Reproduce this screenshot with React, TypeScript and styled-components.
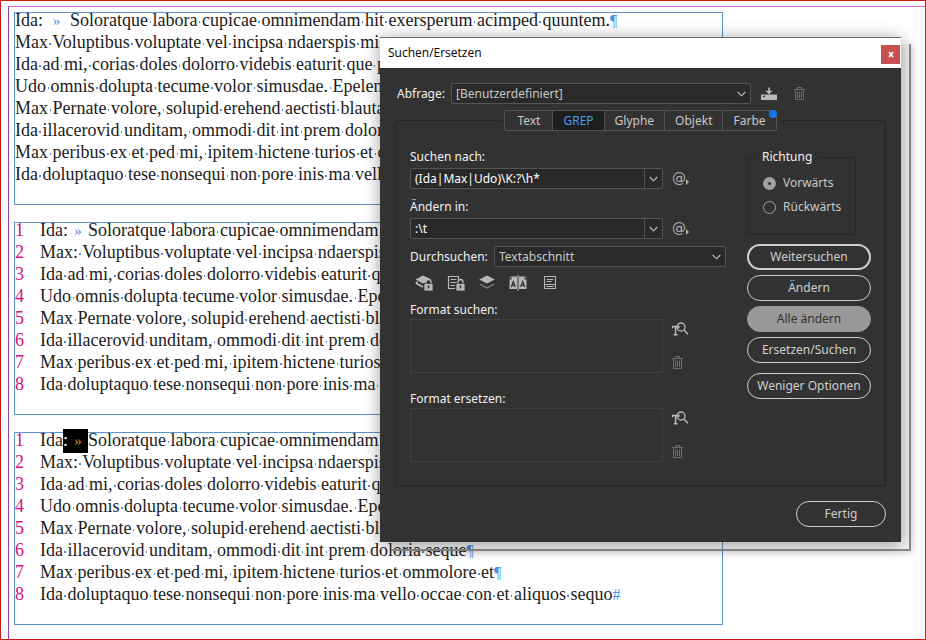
import React from "react";
import styled, { createGlobalStyle } from "styled-components";

const GlobalStyle = createGlobalStyle`
  *, *::before, *::after { box-sizing: border-box; }
  body { margin: 0; background: #fff; }
  button, input, select, textarea { font: inherit; margin: 0; }
`;

const serif = `"Liberation Serif", serif`;
const sans = `"Noto Sans", sans-serif`;
const blue = "#4a90e2";

/* ---------- document ---------- */

const Page = styled.main`
  position: relative;
  min-height: 100vh;
  border: 1px solid #c81a1a;
  padding: 5px 0 0 7px;
  display: flex;
  overflow: hidden;
  background: #fff;
`;

const MarginArea = styled.div`
  flex: 1;
  min-width: 0;
  border-top: 1px solid #cf6bd6;
  border-left: 1px solid #8344b8;
  padding: 5px 202px 0 5px;
  display: flex;
  flex-direction: column;
  gap: 17px;
`;

const Frame = styled.section`
  border: 1px solid #5b94cf;
  padding-bottom: 19px;
`;

const Lines = styled.div`
  margin-top: -4px;
  font-family: ${serif};
  font-size: 18px;
  line-height: 22px;
  color: #1c1c1c;
`;

const Line = styled.p`
  margin: 0;
  height: 22px;
  display: flex;
  white-space: pre;
`;

const LineNumber = styled.span`
  width: 25px;
  flex: none;
  color: #d6107e;
`;

const Space = styled.span`
  background: radial-gradient(circle at 50% 60%, ${blue} 0 0.8px, transparent 1px);
`;

const Mark = styled.span`
  color: ${blue};
  font-size: 16px;
  line-height: 16px;
`;

const Tab = styled.span<{ $wide?: boolean }>`
  display: inline-block;
  width: ${(p) => (p.$wide ? 27 : 20)}px;
  text-align: center;
  color: ${blue};
  font-size: 15px;
  line-height: 16px;
`;

const Selection = styled.span`
  display: inline-block;
  height: 24px;
  background: #000;
  color: #fff;
  ${Tab} { color: #d98a1c; }
`;

/* ---------- dialog ---------- */

const WindowEdge = styled.div`
  position: absolute;
  top: 43px;
  right: 14px;
  width: 520px;
  height: 507px;
  border-right: 2px solid #8c8c8c;
  border-bottom: 2px solid #8c8c8c;
  background: rgba(0, 0, 0, 0.05);
  box-shadow: 2px 2px 6px rgba(0, 0, 0, 0.15);
`;

const Dialog = styled.div`
  position: absolute;
  top: 36px;
  right: 24px;
  width: 521px;
  border-top: 1px solid #6e6e6e;
  background: #323232;
  color: #f0f0f0;
  font-family: ${sans};
  font-size: 12px;
  line-height: 16px;
  box-shadow: 0 2px 16px rgba(0, 0, 0, 0.38);
`;

const TitleBar = styled.header`
  height: 30px;
  background: #fff;
  color: #000;
  display: flex;
  align-items: center;
  justify-content: space-between;
  padding: 0 1px 0 8px;
`;

const Title = styled.h1`
  margin: 0;
  font-family: "Open Sans", sans-serif;
  font-size: 12px;
  font-weight: 400;
`;

const CloseButton = styled.button`
  width: 19px;
  height: 19px;
  margin-top: 3px;
  border: 0;
  padding: 0;
  background: #c75050;
  display: grid;
  place-items: center;
`;

const Body = styled.div`
  padding: 15px;
`;

const QueryRow = styled.div`
  display: flex;
  align-items: center;
  padding-left: 2px;
`;

const QueryLabel = styled.label`
  width: 54px;
`;

const SelectBox = styled.span`
  flex: 1;
  display: grid;
  align-items: center;
  height: 21px;
  border: 1px solid #545454;
  border-radius: 2px;
  background: #2a2a2a;
  & > * { grid-area: 1 / 1; }
  & > svg { justify-self: end; margin-right: 4px; pointer-events: none; }
`;

const Select = styled.select`
  appearance: none;
  width: 100%;
  height: 19px;
  border: 0;
  padding: 0 20px 0 4px;
  background: transparent;
  color: #c8c8c8;
`;

const QueryActions = styled.span`
  width: 135px;
  display: flex;
  padding-left: 10px;
  gap: 17px;
`;

const IconButton = styled.button`
  border: 0;
  padding: 0;
  background: none;
  display: flex;
  color: #b8b8b8;
  &:disabled { color: #6c6c6c; }
`;

const Panel = styled.section`
  margin-top: 16px;
  border: 1px solid #262626;
  border-radius: 2px;
  padding: 0 14px 23px;
`;

const Tabs = styled.div`
  width: fit-content;
  margin: -11px auto 0;
  padding: 0 3px;
  background: #323232;
  display: flex;
`;

const TabButton = styled.button<{ $active?: boolean }>`
  position: relative;
  height: 21px;
  min-width: 49px;
  margin-right: -1px;
  border: 1px solid #545454;
  padding: 0 10px;
  background: ${(p) => (p.$active ? "#1e1e1e" : "transparent")};
  color: ${(p) => (p.$active ? "#4a9be8" : "#c8c8c8")};
  &:first-child { border-radius: 2px 0 0 2px; }
  &:last-child { border-radius: 0 2px 2px 0; margin-right: 0; }
`;

const Dot = styled.span`
  position: absolute;
  top: -1px;
  right: -1px;
  width: 8px;
  height: 8px;
  border-radius: 50%;
  background: #1473e6;
`;

const Columns = styled.div`
  display: grid;
  grid-template-columns: 1fr 124px;
  column-gap: 21px;
  padding-top: 18px;
`;

const FieldLabel = styled.label<{ $gap?: number; $tight?: boolean }>`
  display: block;
  height: ${(p) => (p.$tight ? 17 : 19)}px;
  margin-top: ${(p) => p.$gap ?? 0}px;
  line-height: 16px;
`;

const FieldRow = styled.div`
  display: flex;
  gap: 9px;
`;

const Combo = styled.span`
  flex: 1;
  height: 21px;
  display: flex;
  border: 1px solid #545454;
  border-radius: 2px;
  background: #292929;
`;

const ComboInput = styled.input`
  flex: 1;
  min-width: 0;
  border: 0;
  padding: 0 4px;
  background: transparent;
  color: #fff;
`;

const ComboArrow = styled.button`
  width: 18px;
  border: 0;
  border-left: 1px solid #545454;
  padding: 0;
  background: none;
  display: grid;
  place-items: center;
`;

const SideIcons = styled.span`
  width: 54px;
  display: flex;
  flex-direction: column;
  align-items: flex-start;
  gap: 20px;
  padding-top: 3px;
`;

const AtButton = styled(IconButton)`
  font-family: "DejaVu Sans", sans-serif;
  font-size: 14px;
  line-height: 14px;
  align-items: flex-end;
  color: #b0b0b0;
`;

const ScopeRow = styled.div`
  display: flex;
  align-items: center;
  margin-top: 7px;
`;

const ScopeLabel = styled.label`
  width: 84px;
`;

const Toggles = styled.div`
  display: flex;
  gap: 14px;
  padding: 8px 0 0 5px;
`;

const FormatBox = styled.textarea`
  flex: 1;
  display: block;
  height: 54px;
  border: 1px solid #404040;
  padding: 2px 4px;
  background: transparent;
  color: #fff;
  resize: none;
`;

const Side = styled.div`
  display: flex;
  flex-direction: column;
  gap: 5px;
`;

const Direction = styled.fieldset`
  margin: 0 15px 4px 0;
  height: 86px;
  border: 1px solid #262626;
  border-radius: 2px;
  padding: 6px 0 0 15px;
`;

const Legend = styled.legend`
  padding: 0 6px;
  margin-left: -7px;
`;

const RadioLabel = styled.label`
  display: flex;
  align-items: center;
  gap: 7px;
  height: 24px;
  color: #c8c8c8;
`;

const Radio = styled.input`
  appearance: none;
  width: 13px;
  height: 13px;
  border: 1px solid #a0a0a0;
  border-radius: 50%;
  &:checked { border: 5px solid #a0a0a0; }
`;

const Pill = styled.button<{ $kind?: "default" | "hover"; $apart?: boolean }>`
  height: 26px;
  border-radius: 13px;
  padding: 0;
  border: ${(p) => (p.$kind === "default" ? 2 : 1)}px solid ${(p) => (p.$kind === "hover" ? "#999" : "#cfcfcf")};
  background: ${(p) => (p.$kind === "hover" ? "#999" : "transparent")};
  color: ${(p) => (p.$kind === "hover" ? "#323232" : "#cfcfcf")};
  margin-top: ${(p) => (p.$apart ? 5 : 0)}px;
`;

const Footer = styled.footer`
  display: flex;
  justify-content: flex-end;
  padding-top: 15px;
  ${Pill} { width: 90px; }
`;

/* ---------- icons ---------- */

const Chevron = () => (
  <svg width="9" height="6" viewBox="0 0 9 6" fill="none" stroke="#c0c0c0" strokeWidth="1.1">
    <path d="M0.7 1 4.5 4.8 8.3 1" />
  </svg>
);

const SaveIcon = () => (
  <svg width="16" height="14" viewBox="0 0 16 14" fill="currentColor">
    <path d="M7.2 0.5h1.6v3.3h2.6L8 7.4 4.6 3.8h2.6z" />
    <path d="M0 7.5h16V13H0zM2 8.8v1.2h2V8.8z" fillRule="evenodd" />
  </svg>
);

const TrashIcon = () => (
  <svg width="11" height="13" viewBox="0 0 11 13" fill="none" stroke="currentColor">
    <path d="M0 2.5h11M3.5 2.5v-2h4v2M1.5 2.5v10h8v-10M3.5 4.5v6.5M5.5 4.5v6.5M7.5 4.5v6.5" />
  </svg>
);

const FindFormatIcon = () => (
  <svg width="17" height="14" viewBox="0 0 17 14" fill="none" stroke="currentColor">
    <circle cx="9" cy="5" r="4" strokeWidth="1.3" />
    <path d="M11.8 7.8 16 12.2" strokeWidth="1.5" />
    <path d="M.5 6.3V4.5h6.3v1.8M3.6 4.5v8M1.6 12.8h4" strokeWidth="1.5" />
  </svg>
);

const Padlock = () => (
  <g>
    <path d="M9 8.5h9V16H9z" fill="currentColor" stroke="#323232" strokeWidth="0.8" />
    <path d="M11 8.5V7a2.5 2.5 0 0 1 5 0v1.5" fill="none" stroke="currentColor" strokeWidth="1.3" />
    <path d="M13.5 10.5v3" stroke="#323232" strokeWidth="1.5" />
  </g>
);

const LockedLayersIcon = () => (
  <svg width="18" height="16" viewBox="0 0 18 16">
    <path d="M8 0.5 15.5 4 12 5.5 9.5 8 8 8.5.5 4.5z" fill="currentColor" />
    <path d="M1 8.2 8 12M.8 8l2-1" stroke="currentColor" strokeWidth="1.8" fill="none" />
    <Padlock />
  </svg>
);

const LockedStoriesIcon = () => (
  <svg width="18" height="16" viewBox="0 0 18 16">
    <path d="M8 13.5H1.5v-12h10V5M3.5 4.5h6M3.5 7.5h6M3.5 10.5H8" stroke="currentColor" strokeWidth="1.2" fill="none" />
    <Padlock />
  </svg>
);

const HiddenLayersIcon = () => (
  <svg width="16" height="16" viewBox="0 0 16 16">
    <path d="M8 0.5 15.8 4.5 8 8.5 .2 4.5z" fill="currentColor" />
    <path d="M1 9.2 8 13l7-3.8" stroke="#858585" strokeWidth="1.3" fill="none" />
  </svg>
);

const MasterPagesIcon = () => (
  <svg width="18" height="16" viewBox="0 0 18 16">
    <path d="M2.5 1.5H8V14H.5V4.5h2zM10 1.5h5.5v3h2V14H10z" fill="currentColor" />
    <path d="M9 0v16" stroke="currentColor" />
    <path d="M2.3 12 4.3 6.5 6.3 12M3 10.3h2.6M11.7 12l2-5.5 2 5.5M12.4 10.3H15" stroke="#323232" strokeWidth="1.2" fill="none" />
    <path d="M.3 3.4 2.2 1.2M15.8 1.2l2 2.2" stroke="currentColor" strokeWidth="0.8" />
  </svg>
);

const FootnotesIcon = () => (
  <svg width="18" height="15" viewBox="0 0 18 15" fill="none" stroke="currentColor">
    <path d="M3.5 1.5h11v12h-11zM5.5 4.5h7M5.5 6.5h5M4 9.5h10M5.5 11.5h7" />
  </svg>
);

/* ---------- content ---------- */

const paragraphs = [
  { text: "Voluptibus voluptate vel incipsa ndaerspis mi" },
  { text: "Ida ad mi, corias doles dolorro videbis eaturit que p" },
  { text: "Udo omnis dolupta tecume volor simusdae. Epelen" },
  { text: "Max Pernate volore, solupid erehend aectisti blauta" },
  { text: "Ida illacerovid unditam, ommodi dit int prem doloria seque", end: "¶" },
  { text: "Max peribus ex et ped mi, ipitem hictene turios et ommolore et", end: "¶" },
  { text: "Ida doluptaquo tese nonsequi non pore inis ma vello occae con et aliquos sequo", end: "#" },
];
const firstSentence = "Soloratque labora cupicae omnimendam hit exersperum acimped quuntem.";

const Marked = ({ text }: { text: string }) => (
  <>
    {text.split(" ").map((word, i) => (
      <React.Fragment key={i}>
        {i > 0 && <Space> </Space>}
        {word}
      </React.Fragment>
    ))}
  </>
);

type FrameProps = { numbered?: boolean; selected?: boolean };

const TextFrame = ({ numbered, selected }: FrameProps) => {
  const number = (n: number) => numbered && <LineNumber>{n}</LineNumber>;
  return (
    <Frame>
      <Lines>
        <Line>
          {number(1)}
          <span>
            Ida
            {selected ? <Selection>:<Tab>»</Tab></Selection> : <>:<Tab $wide={!numbered}>»</Tab></>}
            <Marked text={firstSentence} />
            <Mark>¶</Mark>
          </span>
        </Line>
        {paragraphs.map(({ text, end }, i) => (
          <Line key={i}>
            {number(i + 2)}
            <span>
              <Marked text={i === 0 ? `${numbered ? "Max:" : "Max"} ${text}` : text} />
              {end && <Mark>{end}</Mark>}
            </span>
          </Line>
        ))}
      </Lines>
    </Frame>
  );
};

const SpecialButton = () => (
  <AtButton aria-label="Sonderzeichen">
    @
    <svg width="3" height="6" viewBox="0 0 3 6" fill="currentColor"><path d="M0 0 3 3 0 6z" /></svg>
  </AtButton>
);

const ComboField = ({ id, label, value, gap }: { id: string; label: string; value: string; gap?: number }) => (
  <>
    <FieldLabel htmlFor={id} $gap={gap}>{label}</FieldLabel>
    <FieldRow>
      <Combo>
        <ComboInput id={id} defaultValue={value} spellCheck={false} />
        <ComboArrow aria-label={`${label} Verlauf`}><Chevron /></ComboArrow>
      </Combo>
      <SideIcons><SpecialButton /></SideIcons>
    </FieldRow>
  </>
);

const FormatField = ({ id, label, gap }: { id: string; label: string; gap: number }) => (
  <>
    <FieldLabel htmlFor={id} $gap={gap} $tight>{label}</FieldLabel>
    <FieldRow>
      <FormatBox id={id} readOnly />
      <SideIcons>
        <IconButton aria-label="Attribute angeben"><FindFormatIcon /></IconButton>
        <IconButton aria-label="Attribute löschen" disabled><TrashIcon /></IconButton>
      </SideIcons>
    </FieldRow>
  </>
);

const toggles = [
  { name: "Gesperrte Ebenen", Icon: LockedLayersIcon },
  { name: "Gesperrte Textabschnitte", Icon: LockedStoriesIcon },
  { name: "Ausgeblendete Ebenen", Icon: HiddenLayersIcon },
  { name: "Musterseiten", Icon: MasterPagesIcon },
  { name: "Fußnoten", Icon: FootnotesIcon },
];

const FindReplaceDialog = () => (
  <Dialog role="dialog" aria-labelledby="dialog-title">
    <TitleBar>
      <Title id="dialog-title">Suchen/Ersetzen</Title>
      <CloseButton aria-label="Schließen">
        <svg width="6" height="7" viewBox="0 0 6 7" stroke="#fff" strokeWidth="1.6"><path d="M1 1l4 5M5 1 1 6" /></svg>
      </CloseButton>
    </TitleBar>
    <Body>
      <QueryRow>
        <QueryLabel htmlFor="query">Abfrage:</QueryLabel>
        <SelectBox>
          <Select id="query"><option>[Benutzerdefiniert]</option></Select>
          <Chevron />
        </SelectBox>
        <QueryActions>
          <IconButton aria-label="Abfrage speichern"><SaveIcon /></IconButton>
          <IconButton aria-label="Abfrage löschen" disabled><TrashIcon /></IconButton>
        </QueryActions>
      </QueryRow>
      <Panel>
        <Tabs role="tablist">
          {["Text", "GREP", "Glyphe", "Objekt", "Farbe"].map((name) => (
            <TabButton key={name} role="tab" aria-selected={name === "GREP"} $active={name === "GREP"}>
              {name}
              {name === "Farbe" && <Dot />}
            </TabButton>
          ))}
        </Tabs>
        <Columns>
          <div>
            <ComboField id="find" label="Suchen nach:" value="(Ida|Max|Udo)\K:?\h*" />
            <ComboField id="change" label="Ändern in:" value=":\t" gap={10} />
            <ScopeRow>
              <ScopeLabel htmlFor="scope">Durchsuchen:</ScopeLabel>
              <SelectBox>
                <Select id="scope"><option>Textabschnitt</option></Select>
                <Chevron />
              </SelectBox>
            </ScopeRow>
            <Toggles>
              {toggles.map(({ name, Icon }) => (
                <IconButton key={name} aria-label={name}><Icon /></IconButton>
              ))}
            </Toggles>
            <FormatField id="find-format" label="Format suchen:" gap={11} />
            <FormatField id="change-format" label="Format ersetzen:" gap={18} />
          </div>
          <Side>
            <Direction>
              <Legend>Richtung</Legend>
              <RadioLabel><Radio type="radio" name="direction" defaultChecked />Vorwärts</RadioLabel>
              <RadioLabel><Radio type="radio" name="direction" />Rückwärts</RadioLabel>
            </Direction>
            <Pill $kind="default">Weitersuchen</Pill>
            <Pill>Ändern</Pill>
            <Pill $kind="hover">Alle ändern</Pill>
            <Pill>Ersetzen/Suchen</Pill>
            <Pill $apart>Weniger Optionen</Pill>
          </Side>
        </Columns>
      </Panel>
      <Footer><Pill>Fertig</Pill></Footer>
    </Body>
  </Dialog>
);

export default function App() {
  return (
    <>
      <GlobalStyle />
      <Page>
        <MarginArea>
          <TextFrame />
          <TextFrame numbered />
          <TextFrame numbered selected />
        </MarginArea>
        <WindowEdge />
        <FindReplaceDialog />
      </Page>
    </>
  );
}
